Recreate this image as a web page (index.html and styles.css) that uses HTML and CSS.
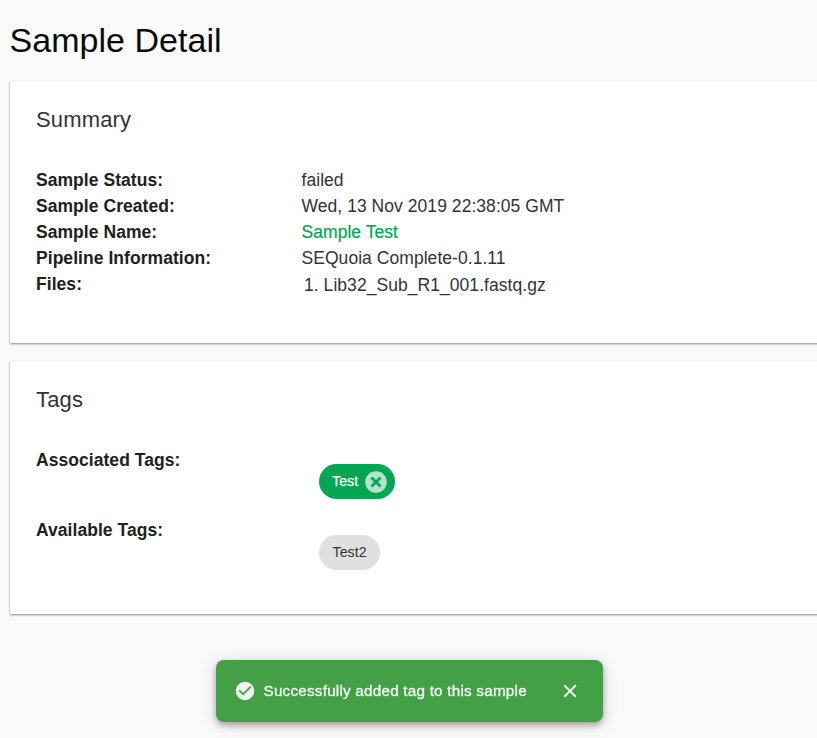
FILE: index.html
```html
<!DOCTYPE html>
<html lang="en">
<head>
<meta charset="utf-8">
<title>Sample Detail</title>
<link rel="stylesheet" href="styles.css">
</head>
<body>
<main>
<h1>Sample Detail</h1>
<section class="card summary">
<h2>Summary</h2>
<dl>
<dt>Sample Status:</dt><dd>failed</dd>
<dt>Sample Created:</dt><dd>Wed, 13 Nov 2019 22:38:05 GMT</dd>
<dt>Sample Name:</dt><dd><a>Sample Test</a></dd>
<dt>Pipeline Information:</dt><dd>SEQuoia Complete-0.1.11</dd>
<dt>Files:</dt><dd class="files">1. Lib32_Sub_R1_001.fastq.gz</dd>
</dl>
</section>
<section class="card tags">
<h2>Tags</h2>
<div class="row"><b>Associated Tags:</b><span class="chip on"><span>Test</span><svg class="remove" viewBox="0 0 24 24"><path d="M12 2C6.47 2 2 6.47 2 12s4.47 10 10 10 10-4.47 10-10S17.53 2 12 2z"/><path class="cross" d="M7.8 7.8l8.4 8.4M16.2 7.8l-8.4 8.4"/></svg></span></div>
<div class="row"><b>Available Tags:</b><span class="chip"><span>Test2</span></span></div>
</section>
</main>
<div class="snackbar">
<svg class="check" viewBox="0 0 24 24"><path d="M12 2C6.48 2 2 6.48 2 12s4.48 10 10 10 10-4.48 10-10S17.52 2 12 2zm-2 15l-5-5 1.41-1.41L10 14.17l7.59-7.59L19 8l-9 9z"/></svg>
<span class="message">Successfully added tag to this sample</span>
<svg class="close" viewBox="0 0 24 24"><path d="M19 6.41L17.59 5 12 10.59 6.41 5 5 6.41 10.59 12 5 17.59 6.41 19 12 13.41 17.59 19 19 17.59 13.41 12z"/></svg>
</div>
</body>
</html>
```
FILE: styles.css
```css
* { box-sizing: border-box; }
body { margin: 0; height: 738px; overflow: hidden; background: #fafafa; color: #212121; font: 17.5px/26px "Liberation Sans", Arial, sans-serif; letter-spacing: .05px; }
main { padding: 20px 0 0 10px; }
h1 { margin: 0 0 0 -.5px; height: 61px; font-size: 34px; line-height: 40px; font-weight: 400; color: #0a0a0a; letter-spacing: .03px; }
.card { background: #fff; padding: 26px; box-shadow: 0 1px 2px rgba(0,0,0,.45); margin-right: -10px; }
.summary { height: 262px; margin-bottom: 18px; }
.tags { height: 253px; }
h2 { margin: 0 0 34px; font-size: 22px; line-height: 26px; font-weight: 400; color: #333; letter-spacing: .15px; }
dl { display: grid; grid-template-columns: 265.5px 1fr; margin: 0; }
dt { font-weight: 700; }
dd { margin: 0; color: #333; }
a { color: #00a651; -webkit-text-stroke: .2px; }
.files { padding: 1px 0 0 2.5px; }
.row { display: flex; height: 70px; }
.row b { width: 283px; }
.chip { display: flex; align-items: center; align-self: flex-start; height: 35px; margin-top: 17px; padding: 0 13.5px; border-radius: 18px; background: #e0e0e0; color: #333; font-size: 14.2px; }
.chip span { padding-bottom: 2px; }
.row:last-child .chip { margin-top: 18px; }
.chip.on { background: #00a651; color: #fff; padding-left: 13px; padding-right: 6px; -webkit-text-stroke: .25px; }
.snackbar { position: fixed; left: 215.5px; top: 660px; width: 387px; height: 62px; display: flex; align-items: center; padding: 0 22px 0 18px; border-radius: 8px; background: #43a047; color: #fff; font-size: 15.3px; letter-spacing: .2px; box-shadow: 0 3px 6px rgba(0,0,0,.3), 0 3px 18px rgba(0,0,0,.14); }
.message { color: rgba(255,255,255,.92); -webkit-text-stroke: .3px; }
svg { display: block; fill: currentColor; flex: none; }
.check { width: 22px; height: 22px; margin-right: 8px; opacity: .9; }
.close { width: 22px; height: 22px; margin-left: auto; }
.chip .remove { width: 26px; height: 26px; margin-left: 5px; fill: #b3e4cb; -webkit-text-stroke: 0; }
.cross { fill: none; stroke: #00a651; stroke-width: 2.6; }
```
